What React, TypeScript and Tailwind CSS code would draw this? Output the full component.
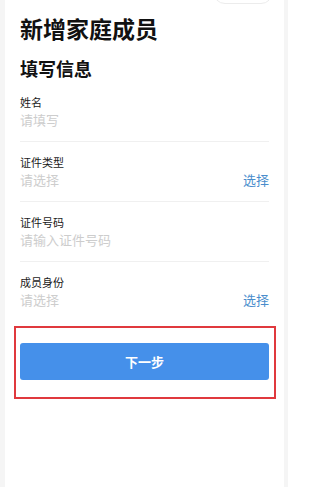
import React from "react";

const font = { fontFamily: '"Noto Sans CJK SC", "Noto Sans", sans-serif' };

function Field({ label, placeholder, select, divider = true }: { label: string; placeholder: string; select?: boolean; divider?: boolean }) {
  return (
    <div className={divider ? "border-b border-[#f0f0f0] pb-[12px]" : ""}>
      <div className="text-[11px] leading-[15px] text-[#1a1a1a]">{label}</div>
      <div className="mt-[1px] flex items-center justify-between">
        <span className="text-[13px] leading-[18px] text-[#cdcdcd]">{placeholder}</span>
        {select && <span className="text-[13px] leading-[18px] text-[#4a8dcc]">选择</span>}
      </div>
    </div>
  );
}

export default function App() {
  return (
    <div className="h-[487px] w-[288px] overflow-hidden bg-[#f5f5f5] px-[5px]" style={font}>
      <div className="relative flex h-full w-[279px] flex-col bg-white px-[15px]">
        <div className="absolute left-[208px] top-[-20px] h-[24px] w-[60px] rounded-full border border-[#ececec] bg-white" />
        <h1 className="pt-[13px] text-[23px] font-bold leading-[30px] text-[#111]">新增家庭成员</h1>
        <h2 className="mt-[13px] text-[18px] font-bold leading-[24px] text-[#111]">填写信息</h2>
        <div className="mt-[15px] flex flex-col gap-[13px]">
          <Field label="姓名" placeholder="请填写" />
          <Field label="证件类型" placeholder="请选择" select />
          <Field label="证件号码" placeholder="请输入证件号码" />
          <Field label="成员身份" placeholder="请选择" select divider={false} />
        </div>
        <div className="-ml-[6px] -mr-[7px] mt-[17px] border-2 border-[#e0393e] pb-[17px] pl-[4px] pr-[5px] pt-[15px]">
          <button className="flex h-[37px] w-full items-center justify-center rounded-[3px] bg-[#4590ea] text-[13px] font-bold text-white">
            下一步
          </button>
        </div>
      </div>
    </div>
  );
}
